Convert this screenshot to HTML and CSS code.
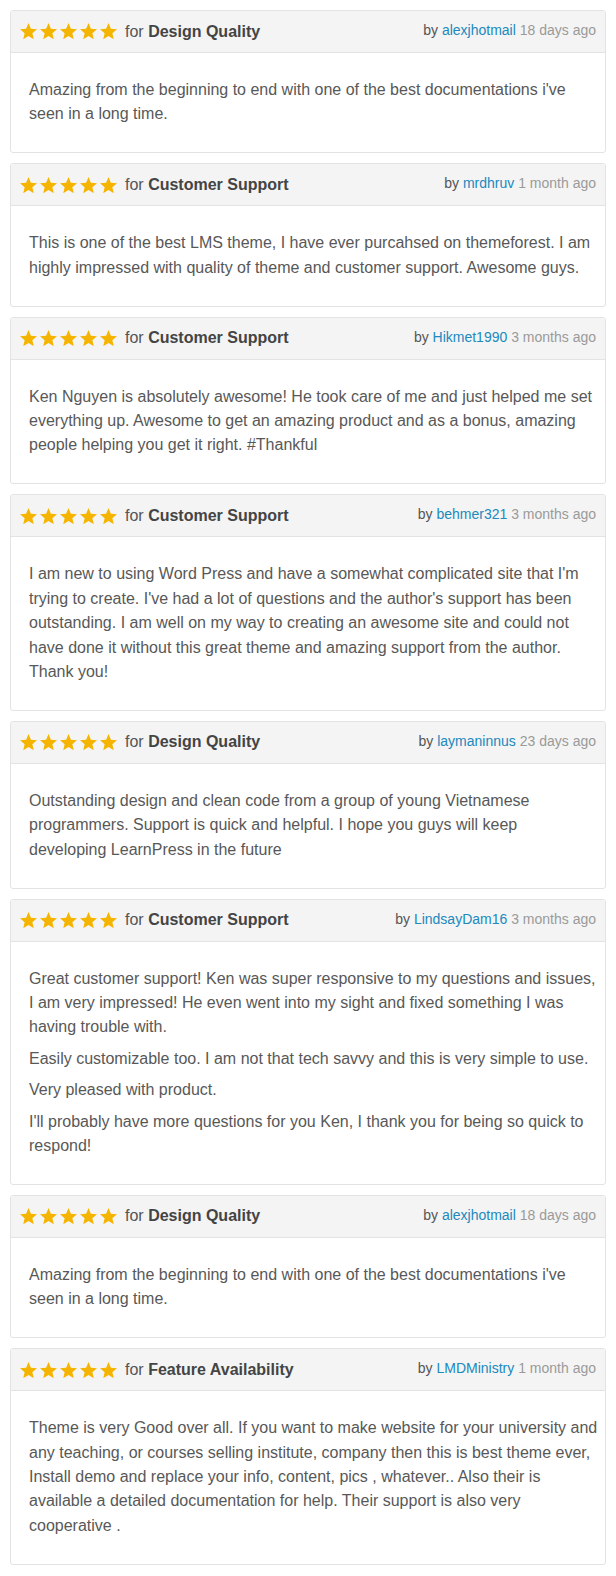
FILE: index.html
```html
<!DOCTYPE html>
<html lang="en">
<head>
<meta charset="utf-8">
<title>Reviews</title>
<link rel="stylesheet" href="styles.css">
</head>
<body>
<svg width="0" height="0" class="defs" aria-hidden="true">
  <defs>
    <symbol id="star" viewBox="2 2 20 19.3">
      <path d="M12 17.27L18.18 21l-1.64-7.03L22 9.24l-7.19-.61L12 2 9.19 8.63 2 9.240l5.46 4.73L5.82 21z"/>
    </symbol>
  </defs>
</svg>

<div class="reviews">

  <article class="review">
    <header class="review-head">
      <div class="review-title">
        <span class="stars"><svg class="star"><use href="#star"/></svg><svg class="star"><use href="#star"/></svg><svg class="star"><use href="#star"/></svg><svg class="star"><use href="#star"/></svg><svg class="star"><use href="#star"/></svg></span>
        <span class="for">for <b>Design Quality</b></span>
      </div>
      <div class="review-meta">by <a class="author">alexjhotmail</a> <span class="date">18 days ago</span></div>
    </header>
    <div class="review-body">
      <p>Amazing from the beginning to end with one of the best documentations i've seen in a long time.</p>
    </div>
  </article>

  <article class="review">
    <header class="review-head">
      <div class="review-title">
        <span class="stars"><svg class="star"><use href="#star"/></svg><svg class="star"><use href="#star"/></svg><svg class="star"><use href="#star"/></svg><svg class="star"><use href="#star"/></svg><svg class="star"><use href="#star"/></svg></span>
        <span class="for">for <b>Customer Support</b></span>
      </div>
      <div class="review-meta">by <a class="author">mrdhruv</a> <span class="date">1 month ago</span></div>
    </header>
    <div class="review-body">
      <p>This is one of the best LMS theme, I have ever purcahsed on themeforest. I am highly impressed with quality of theme and customer support. Awesome guys.</p>
    </div>
  </article>

  <article class="review">
    <header class="review-head">
      <div class="review-title">
        <span class="stars"><svg class="star"><use href="#star"/></svg><svg class="star"><use href="#star"/></svg><svg class="star"><use href="#star"/></svg><svg class="star"><use href="#star"/></svg><svg class="star"><use href="#star"/></svg></span>
        <span class="for">for <b>Customer Support</b></span>
      </div>
      <div class="review-meta">by <a class="author">Hikmet1990</a> <span class="date">3 months ago</span></div>
    </header>
    <div class="review-body">
      <p>Ken Nguyen is absolutely awesome! He took care of me and just helped me set everything up. Awesome to get an amazing product and as a bonus, amazing people helping you get it right. #Thankful</p>
    </div>
  </article>

  <article class="review">
    <header class="review-head">
      <div class="review-title">
        <span class="stars"><svg class="star"><use href="#star"/></svg><svg class="star"><use href="#star"/></svg><svg class="star"><use href="#star"/></svg><svg class="star"><use href="#star"/></svg><svg class="star"><use href="#star"/></svg></span>
        <span class="for">for <b>Customer Support</b></span>
      </div>
      <div class="review-meta">by <a class="author">behmer321</a> <span class="date">3 months ago</span></div>
    </header>
    <div class="review-body">
      <p>I am new to using Word Press and have a somewhat complicated site that I'm trying to create. I've had a lot of questions and the author's support has been outstanding. I am well on my way to creating an awesome site and could not have done it without this great theme and amazing support from the author. Thank you!</p>
    </div>
  </article>

  <article class="review">
    <header class="review-head">
      <div class="review-title">
        <span class="stars"><svg class="star"><use href="#star"/></svg><svg class="star"><use href="#star"/></svg><svg class="star"><use href="#star"/></svg><svg class="star"><use href="#star"/></svg><svg class="star"><use href="#star"/></svg></span>
        <span class="for">for <b>Design Quality</b></span>
      </div>
      <div class="review-meta">by <a class="author">laymaninnus</a> <span class="date">23 days ago</span></div>
    </header>
    <div class="review-body">
      <p>Outstanding design and clean code from a group of young Vietnamese programmers. Support is quick and helpful. I hope you guys will keep developing LearnPress in the future</p>
    </div>
  </article>

  <article class="review">
    <header class="review-head">
      <div class="review-title">
        <span class="stars"><svg class="star"><use href="#star"/></svg><svg class="star"><use href="#star"/></svg><svg class="star"><use href="#star"/></svg><svg class="star"><use href="#star"/></svg><svg class="star"><use href="#star"/></svg></span>
        <span class="for">for <b>Customer Support</b></span>
      </div>
      <div class="review-meta">by <a class="author">LindsayDam16</a> <span class="date">3 months ago</span></div>
    </header>
    <div class="review-body">
      <p>Great customer support! Ken was super responsive to my questions and issues, I am very impressed! He even went into my sight and fixed something I was having trouble with.</p>
      <p>Easily customizable too. I am not that tech savvy and this is very simple to use.</p>
      <p>Very pleased with product.</p>
      <p>I'll probably have more questions for you Ken, I thank you for being so quick to respond!</p>
    </div>
  </article>

  <article class="review">
    <header class="review-head">
      <div class="review-title">
        <span class="stars"><svg class="star"><use href="#star"/></svg><svg class="star"><use href="#star"/></svg><svg class="star"><use href="#star"/></svg><svg class="star"><use href="#star"/></svg><svg class="star"><use href="#star"/></svg></span>
        <span class="for">for <b>Design Quality</b></span>
      </div>
      <div class="review-meta">by <a class="author">alexjhotmail</a> <span class="date">18 days ago</span></div>
    </header>
    <div class="review-body">
      <p>Amazing from the beginning to end with one of the best documentations i've seen in a long time.</p>
    </div>
  </article>

  <article class="review">
    <header class="review-head">
      <div class="review-title">
        <span class="stars"><svg class="star"><use href="#star"/></svg><svg class="star"><use href="#star"/></svg><svg class="star"><use href="#star"/></svg><svg class="star"><use href="#star"/></svg><svg class="star"><use href="#star"/></svg></span>
        <span class="for">for <b>Feature Availability</b></span>
      </div>
      <div class="review-meta">by <a class="author">LMDMinistry</a> <span class="date">1 month ago</span></div>
    </header>
    <div class="review-body">
      <p>Theme is very Good over all. If you want to make website for your university and any teaching, or courses selling institute, company then this is best theme ever, Install demo and replace your info, content, pics , whatever.. Also their is available a detailed documentation for help. Their support is also very cooperative .</p>
    </div>
  </article>

</div>
</body>
</html>
```

FILE: styles.css
```css
* {
  box-sizing: border-box;
}

html, body {
  background: #ffffff;
}

body {
  margin: 0;
  padding: 10px;
  font-family: "Liberation Sans", Arial, Helvetica, sans-serif;
  color: #555555;
}

.defs {
  position: absolute;
  width: 0;
  height: 0;
  overflow: hidden;
}

.reviews {
  display: flex;
  flex-direction: column;
  gap: 10px;
}

.review {
  border: 1px solid #e3e3e3;
  border-radius: 3px;
  background: #ffffff;
}

.review-head {
  display: flex;
  align-items: center;
  justify-content: space-between;
  height: 42px;
  padding: 0 9px 0 9px;
  background: #f4f4f4;
  border-bottom: 1px solid #e3e3e3;
  border-radius: 3px 3px 0 0;
}

.review-title {
  display: flex;
  align-items: center;
  gap: 8px;
}

.stars {
  display: flex;
  gap: 3px;
}

.star {
  width: 17px;
  height: 16.5px;
  fill: #f5b400;
  display: block;
}

.for {
  font-size: 16px;
  color: #555555;
}

.for b {
  color: #444444;
  font-weight: bold;
}

.review-meta {
  font-size: 14px;
  color: #555555;
  margin-bottom: 3px;
}

.author {
  color: #2089bd;
  text-decoration: none;
}

.date {
  color: #9a9a9a;
}

.review-body {
  padding: 25px 6px 25.5px 18px;
  font-size: 16px;
  line-height: 24.4px;
  color: #585858;
}

.review-body p {
  margin: 0;
}

.review-body p + p {
  margin-top: 7px;
}
```
